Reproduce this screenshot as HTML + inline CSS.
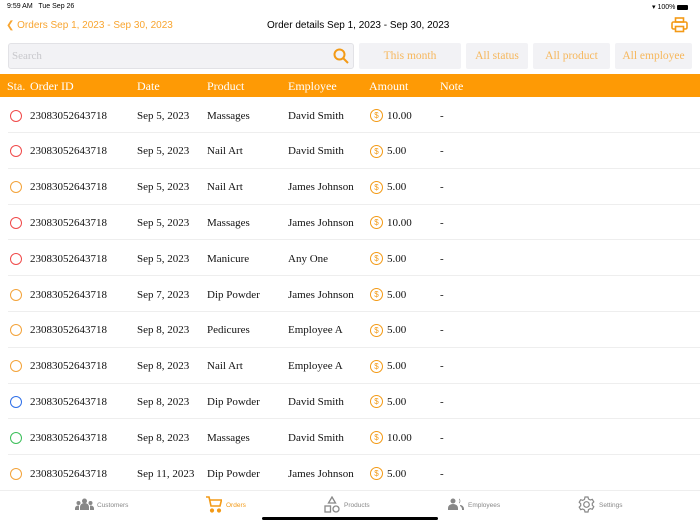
<!DOCTYPE html>
<html><head><meta charset="utf-8"><style>
*{margin:0;padding:0;box-sizing:border-box}
body{width:700px;height:525px;background:#fff;position:relative;overflow:hidden;font-family:"Liberation Serif",serif;}
.abs{position:absolute}
.sys{font-family:"Liberation Sans",sans-serif;font-size:7px;color:#000;top:3px}
.nav{font-family:"Liberation Sans",sans-serif;font-size:10px;top:20px}
.btn{position:absolute;top:43px;height:26px;background:#f2f2f5;border-radius:2px;color:#f6b75c;font-size:11.5px;text-align:center;line-height:26px}
.hdr{position:absolute;top:74px;left:0;width:700px;height:23px;background:#fe9a05;color:#fff;font-size:12px}
.hdr span,.row span{position:absolute}
.hdr span{top:5px}
.row{position:absolute;left:0;width:700px;height:36px;font-size:11px;color:#111}
.row span{top:12.5px}
.row .ln{position:absolute;left:8px;right:0;bottom:0;height:1px;background:#eee}
.c{position:absolute;left:9.5px;top:12.5px;width:12px;height:12px;border-radius:50%;border:1.5px solid}
.coin{position:absolute;left:370px;top:12px;width:13px;height:13px;border-radius:50%;border:1.3px solid #f39a16;color:#f39a16;font-size:8px;line-height:11px;text-align:center;font-family:"Liberation Sans",sans-serif}
.tab{position:absolute;top:502px;font-family:"Liberation Sans",sans-serif;font-size:6.5px;color:#888}
</style></head><body>
<div class="abs sys" style="left:7px">9:59 AM&nbsp;&nbsp; Tue Sep 26</div>
<div class="abs sys" style="left:652px">▾ 100% <span style="display:inline-block;width:11px;height:5px;background:#000;border-radius:1px;vertical-align:middle"></span></div>
<div class="abs nav" style="left:6px;color:#f8a530">&#10094; Orders Sep 1, 2023 - Sep 30, 2023</div>
<div class="abs nav" style="left:267px;color:#000">Order details Sep 1, 2023 - Sep 30, 2023</div>
<svg class="abs" style="left:671px;top:17px" width="17" height="16" viewBox="0 0 17 16" fill="none" stroke="#f39a16" stroke-width="1.6"><rect x="4.5" y="1" width="8" height="4"/><rect x="1" y="5" width="15" height="7" rx="1.5"/><rect x="4.5" y="9.5" width="8" height="5" fill="#fff"/></svg>
<div class="abs" style="left:8px;top:43px;width:346px;height:26px;background:#f2f2f5;border:1px solid #e2e2e6;border-radius:3px;color:#c8c8cc;font-size:11px;line-height:24px;padding-left:3px">Search</div>
<svg class="abs" style="left:333px;top:48px" width="16" height="16" viewBox="0 0 16 16" fill="none" stroke="#f39a16" stroke-width="2"><circle cx="6.5" cy="6.5" r="5"/><line x1="10" y1="10" x2="15" y2="15"/></svg>
<div class="btn" style="left:359px;width:102px">This month</div>
<div class="btn" style="left:466px;width:62px">All status</div>
<div class="btn" style="left:533px;width:77px">All product</div>
<div class="btn" style="left:615px;width:77px">All employee</div>
<div class="hdr"><span style="left:7px">Sta.</span><span style="left:30px">Order ID</span><span style="left:137px">Date</span><span style="left:207px">Product</span><span style="left:288px">Employee</span><span style="left:369px">Amount</span><span style="left:440px">Note</span></div>
<div id="rows"></div>
<script>
var d=[["#f04a4a","Sep 5, 2023","Massages","David Smith","10.00"],["#f04a4a","Sep 5, 2023","Nail Art","David Smith","5.00"],["#f3a33a","Sep 5, 2023","Nail Art","James Johnson","5.00"],["#f04a4a","Sep 5, 2023","Massages","James Johnson","10.00"],["#f04a4a","Sep 5, 2023","Manicure","Any One","5.00"],["#f3a33a","Sep 7, 2023","Dip Powder","James Johnson","5.00"],["#f3a33a","Sep 8, 2023","Pedicures","Employee A","5.00"],["#f3a33a","Sep 8, 2023","Nail Art","Employee A","5.00"],["#2f6fe8","Sep 8, 2023","Dip Powder","David Smith","5.00"],["#3cbf5a","Sep 8, 2023","Massages","David Smith","10.00"],["#f3a33a","Sep 11, 2023","Dip Powder","James Johnson","5.00"]];
var h="";d.forEach(function(r,i){h+='<div class="row" style="top:'+(97+i*35.8)+'px"><div class="c" style="border-color:'+r[0]+'"></div><span style="left:30px">23083052643718</span><span style="left:137px">'+r[1]+'</span><span style="left:207px">'+r[2]+'</span><span style="left:288px">'+r[3]+'</span><div class="coin">$</div><span style="left:387px">'+r[4]+'</span><span style="left:440px">-</span><div class="ln"></div></div>';});
document.getElementById("rows").innerHTML=h;
</script>
<div class="abs" style="left:0;top:490px;width:700px;height:35px;background:#fff;border-top:1px solid #eee"></div>
<svg class="abs" style="left:75px;top:498px" width="19" height="12" viewBox="0 0 19 12" fill="#888"><circle cx="9.5" cy="3" r="2.5"/><path d="M5 12v-3a4.5 4 0 0 1 9 0v3z"/><circle cx="3.5" cy="5" r="2"/><path d="M0 12v-2a3.5 3 0 0 1 4-2.5v4.5z"/><circle cx="15.5" cy="5" r="2"/><path d="M19 12v-2a3.5 3 0 0 0-4-2.5v4.5z"/></svg>
<div class="tab" style="left:97px">Customers</div>
<svg class="abs" style="left:205px;top:496px" width="17" height="17" viewBox="0 0 17 17" fill="none" stroke="#f39a16" stroke-width="1.6"><path d="M1 1h3l2 9h9l1.5-6H5"/><circle cx="7" cy="14.5" r="1.3" fill="#f39a16"/><circle cx="14" cy="14.5" r="1.3" fill="#f39a16"/></svg>
<div class="tab" style="left:226px;color:#f39a16">Orders</div>
<svg class="abs" style="left:324px;top:496px" width="16" height="17" viewBox="0 0 16 17" fill="none" stroke="#888" stroke-width="1.3"><path d="M8 1l3.5 6h-7z"/><rect x="1" y="10" width="5.5" height="6"/><circle cx="12" cy="13" r="3"/></svg>
<div class="tab" style="left:344px">Products</div>
<svg class="abs" style="left:448px;top:498px" width="16" height="12" viewBox="0 0 16 12" fill="#888"><circle cx="5" cy="3" r="2.5"/><path d="M0 12v-2a5 4 0 0 1 10 0v2z"/><path d="M11 0.5a3 3 0 0 1 0 5v-1a2 2 0 0 0 0-3z"/><path d="M12 7a4 4 0 0 1 4 4v1h-2v-1a4 4 0 0 0-2-3z"/></svg>
<div class="tab" style="left:468px">Employees</div>
<svg class="abs" style="left:578px;top:496px" width="17" height="17" viewBox="0 0 17 17" fill="none" stroke="#888" stroke-width="1.2"><circle cx="8.5" cy="8.5" r="2.8"/><path d="M7 1h3l.5 2 1.8 1 2-.7 1.5 2.6-1.5 1.4v2l1.5 1.4-1.5 2.6-2-.7-1.8 1L10 16H7l-.5-2-1.8-1-2 .7-1.5-2.6 1.5-1.4v-2L1.2 6.3l1.5-2.6 2 .7 1.8-1z"/></svg>
<div class="tab" style="left:599px">Settings</div>
<div class="abs" style="left:262px;top:517px;width:176px;height:3px;background:#000;border-radius:2px"></div>
</body></html>
